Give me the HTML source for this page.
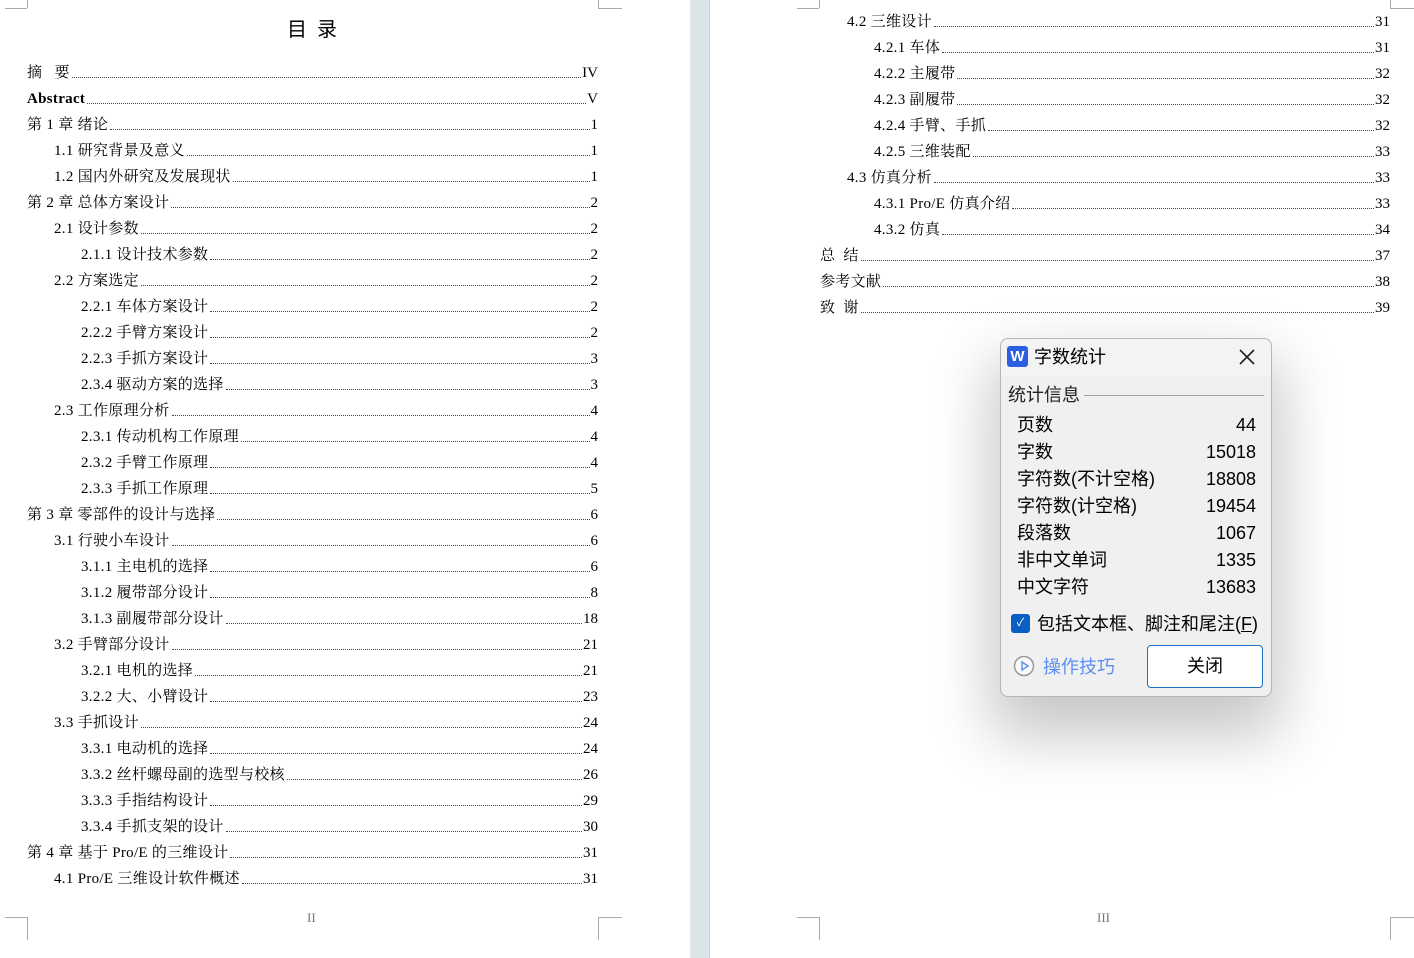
<!DOCTYPE html>
<html><head><meta charset="utf-8"><style>
*{margin:0;padding:0;box-sizing:border-box}
body{width:1414px;height:958px;background:#fff;position:relative;overflow:hidden;font-family:"Liberation Serif","Noto Serif CJK SC",serif;color:#000}
.strip{position:absolute;left:690px;top:0;width:20px;height:958px;background:#d9e5e6;border-left:1px solid #e6eeee;border-right:1px solid #c9d6d7}
.r{position:absolute;height:20px;display:flex;align-items:flex-end;font-size:15px;line-height:20px;white-space:nowrap;margin-top:1px}
.r .t{padding-right:1px;letter-spacing:0.3px}
.r .d{flex:1;border-bottom:1px dotted #444;margin-bottom:5px;margin-left:1px;margin-right:1px}
.m{position:absolute;background:#aaa}
.pn{position:absolute;font-size:13px;color:#777}
.dlg{position:absolute;left:1000px;top:338px;width:272px;height:359px;background:#f0f0f0;border:1px solid #b5b5b5;border-radius:8px;box-shadow:0 30px 60px 10px rgba(0,0,0,.22);font-family:"Liberation Sans","Noto Sans CJK SC",sans-serif}
.dlg .tb{position:absolute;left:0;top:0;width:270px;height:38px;background:#f3f3f3;border-radius:8px 8px 0 0}
.row{position:absolute;left:16px;width:239px;font-size:18px;display:flex;justify-content:space-between;line-height:26px}
</style></head><body>
<div class="strip"></div>
<div class="m" style="left:27px;top:0;width:1px;height:8px"></div><div class="m" style="left:5px;top:8px;width:22px;height:1px"></div>
<div class="m" style="left:598px;top:0;width:1px;height:8px"></div><div class="m" style="left:598px;top:8px;width:24px;height:1px"></div>
<div class="m" style="left:27px;top:917px;width:1px;height:23px"></div><div class="m" style="left:5px;top:917px;width:22px;height:1px"></div>
<div class="m" style="left:598px;top:917px;width:1px;height:23px"></div><div class="m" style="left:598px;top:917px;width:24px;height:1px"></div>
<div class="m" style="left:819px;top:0;width:1px;height:8px"></div><div class="m" style="left:797px;top:8px;width:22px;height:1px"></div>
<div class="m" style="left:1390px;top:0;width:1px;height:8px"></div><div class="m" style="left:1390px;top:8px;width:24px;height:1px"></div>
<div class="m" style="left:819px;top:917px;width:1px;height:23px"></div><div class="m" style="left:797px;top:917px;width:22px;height:1px"></div>
<div class="m" style="left:1390px;top:917px;width:1px;height:23px"></div><div class="m" style="left:1390px;top:917px;width:24px;height:1px"></div>

<div style="position:absolute;left:287px;top:13px;font-size:20px;font-family:'Noto Sans CJK SC',sans-serif;letter-spacing:10px">目录</div>

<div class="r" style="left:27px;width:571px;top:62px"><span class="t">摘&nbsp;&nbsp;&nbsp;要</span><span class="d"></span><span>IV</span></div>
<div class="r" style="left:27px;width:571px;top:88px"><span class="t"><b>Abstract</b></span><span class="d"></span><span>V</span></div>
<div class="r" style="left:27px;width:571px;top:114px"><span class="t">第 1 章 绪论</span><span class="d"></span><span>1</span></div>
<div class="r" style="left:54px;width:544px;top:140px"><span class="t">1.1 研究背景及意义</span><span class="d"></span><span>1</span></div>
<div class="r" style="left:54px;width:544px;top:166px"><span class="t">1.2 国内外研究及发展现状</span><span class="d"></span><span>1</span></div>
<div class="r" style="left:27px;width:571px;top:192px"><span class="t">第 2 章 总体方案设计</span><span class="d"></span><span>2</span></div>
<div class="r" style="left:54px;width:544px;top:218px"><span class="t">2.1 设计参数</span><span class="d"></span><span>2</span></div>
<div class="r" style="left:81px;width:517px;top:244px"><span class="t">2.1.1 设计技术参数</span><span class="d"></span><span>2</span></div>
<div class="r" style="left:54px;width:544px;top:270px"><span class="t">2.2 方案选定</span><span class="d"></span><span>2</span></div>
<div class="r" style="left:81px;width:517px;top:296px"><span class="t">2.2.1 车体方案设计</span><span class="d"></span><span>2</span></div>
<div class="r" style="left:81px;width:517px;top:322px"><span class="t">2.2.2 手臂方案设计</span><span class="d"></span><span>2</span></div>
<div class="r" style="left:81px;width:517px;top:348px"><span class="t">2.2.3 手抓方案设计</span><span class="d"></span><span>3</span></div>
<div class="r" style="left:81px;width:517px;top:374px"><span class="t">2.3.4 驱动方案的选择</span><span class="d"></span><span>3</span></div>
<div class="r" style="left:54px;width:544px;top:400px"><span class="t">2.3 工作原理分析</span><span class="d"></span><span>4</span></div>
<div class="r" style="left:81px;width:517px;top:426px"><span class="t">2.3.1 传动机构工作原理</span><span class="d"></span><span>4</span></div>
<div class="r" style="left:81px;width:517px;top:452px"><span class="t">2.3.2 手臂工作原理</span><span class="d"></span><span>4</span></div>
<div class="r" style="left:81px;width:517px;top:478px"><span class="t">2.3.3 手抓工作原理</span><span class="d"></span><span>5</span></div>
<div class="r" style="left:27px;width:571px;top:504px"><span class="t">第 3 章 零部件的设计与选择</span><span class="d"></span><span>6</span></div>
<div class="r" style="left:54px;width:544px;top:530px"><span class="t">3.1 行驶小车设计</span><span class="d"></span><span>6</span></div>
<div class="r" style="left:81px;width:517px;top:556px"><span class="t">3.1.1 主电机的选择</span><span class="d"></span><span>6</span></div>
<div class="r" style="left:81px;width:517px;top:582px"><span class="t">3.1.2 履带部分设计</span><span class="d"></span><span>8</span></div>
<div class="r" style="left:81px;width:517px;top:608px"><span class="t">3.1.3 副履带部分设计</span><span class="d"></span><span>18</span></div>
<div class="r" style="left:54px;width:544px;top:634px"><span class="t">3.2 手臂部分设计</span><span class="d"></span><span>21</span></div>
<div class="r" style="left:81px;width:517px;top:660px"><span class="t">3.2.1 电机的选择</span><span class="d"></span><span>21</span></div>
<div class="r" style="left:81px;width:517px;top:686px"><span class="t">3.2.2 大、小臂设计</span><span class="d"></span><span>23</span></div>
<div class="r" style="left:54px;width:544px;top:712px"><span class="t">3.3 手抓设计</span><span class="d"></span><span>24</span></div>
<div class="r" style="left:81px;width:517px;top:738px"><span class="t">3.3.1 电动机的选择</span><span class="d"></span><span>24</span></div>
<div class="r" style="left:81px;width:517px;top:764px"><span class="t">3.3.2 丝杆螺母副的选型与校核</span><span class="d"></span><span>26</span></div>
<div class="r" style="left:81px;width:517px;top:790px"><span class="t">3.3.3 手指结构设计</span><span class="d"></span><span>29</span></div>
<div class="r" style="left:81px;width:517px;top:816px"><span class="t">3.3.4 手抓支架的设计</span><span class="d"></span><span>30</span></div>
<div class="r" style="left:27px;width:571px;top:842px"><span class="t">第 4 章 基于 Pro/E 的三维设计</span><span class="d"></span><span>31</span></div>
<div class="r" style="left:54px;width:544px;top:868px"><span class="t">4.1 Pro/E 三维设计软件概述</span><span class="d"></span><span>31</span></div>
<div class="pn" style="left:307px;top:910px">II</div>

<div class="r" style="left:847px;width:543px;top:11px"><span class="t">4.2 三维设计</span><span class="d"></span><span>31</span></div>
<div class="r" style="left:874px;width:516px;top:37px"><span class="t">4.2.1 车体</span><span class="d"></span><span>31</span></div>
<div class="r" style="left:874px;width:516px;top:63px"><span class="t">4.2.2 主履带</span><span class="d"></span><span>32</span></div>
<div class="r" style="left:874px;width:516px;top:89px"><span class="t">4.2.3 副履带</span><span class="d"></span><span>32</span></div>
<div class="r" style="left:874px;width:516px;top:115px"><span class="t">4.2.4 手臂、手抓</span><span class="d"></span><span>32</span></div>
<div class="r" style="left:874px;width:516px;top:141px"><span class="t">4.2.5 三维装配</span><span class="d"></span><span>33</span></div>
<div class="r" style="left:847px;width:543px;top:167px"><span class="t">4.3 仿真分析</span><span class="d"></span><span>33</span></div>
<div class="r" style="left:874px;width:516px;top:193px"><span class="t">4.3.1 Pro/E 仿真介绍</span><span class="d"></span><span>33</span></div>
<div class="r" style="left:874px;width:516px;top:219px"><span class="t">4.3.2 仿真</span><span class="d"></span><span>34</span></div>
<div class="r" style="left:820px;width:570px;top:245px"><span class="t">总&nbsp;&nbsp;结</span><span class="d"></span><span>37</span></div>
<div class="r" style="left:820px;width:570px;top:271px"><span class="t">参考文献</span><span class="d"></span><span>38</span></div>
<div class="r" style="left:820px;width:570px;top:297px"><span class="t">致&nbsp;&nbsp;谢</span><span class="d"></span><span>39</span></div>
<div class="pn" style="left:1097px;top:910px">III</div>

<div class="dlg">
 <div class="tb"></div>
 <div style="position:absolute;left:6px;top:7px;width:21px;height:21px;background:#2b5fe0;border-radius:3px;color:#fff;font-weight:bold;font-size:15px;text-align:center;line-height:21px">W</div>
 <div style="position:absolute;left:33px;top:5px;font-size:18px;line-height:26px">字数统计</div>
 <svg style="position:absolute;left:237px;top:9px" width="18" height="18"><path d="M2 2L16 16M16 2L2 16" stroke="#222" stroke-width="1.6"/></svg>
 <div style="position:absolute;left:7px;top:43px;font-size:18px;line-height:26px;color:#222">统计信息</div>
 <div style="position:absolute;left:83px;top:56px;width:180px;height:1px;background:#a0a0a0"></div>
 <div class="row" style="top:73px"><span>页数</span><span>44</span></div>
 <div class="row" style="top:100px"><span>字数</span><span>15018</span></div>
 <div class="row" style="top:127px"><span>字符数(不计空格)</span><span>18808</span></div>
 <div class="row" style="top:154px"><span>字符数(计空格)</span><span>19454</span></div>
 <div class="row" style="top:181px"><span>段落数</span><span>1067</span></div>
 <div class="row" style="top:208px"><span>非中文单词</span><span>1335</span></div>
 <div class="row" style="top:235px"><span>中文字符</span><span>13683</span></div>
 <div style="position:absolute;left:10px;top:275px;width:19px;height:19px;background:#0a5fc4;border-radius:3px;color:#fff;font-size:11px;text-align:center;line-height:19px">✓</div>
 <div style="position:absolute;left:36px;top:272px;font-size:18px;line-height:26px">包括文本框、脚注和尾注(<u>F</u>)</div>
 <svg style="position:absolute;left:12px;top:316px" width="22" height="22"><circle cx="11" cy="11" r="9.5" fill="#fafafa" stroke="#999" stroke-width="1.5"/><path d="M9 7L15 11L9 15Z" fill="none" stroke="#5b8ef0" stroke-width="1.4"/></svg>
 <div style="position:absolute;left:42px;top:315px;font-size:18px;line-height:26px;color:#5b8ef0">操作技巧</div>
 <div style="position:absolute;left:146px;top:306px;width:116px;height:43px;background:#fff;border:1px solid #1a6fc7;border-radius:4px;font-size:18px;text-align:center;line-height:41px">关闭</div>
</div>
</body></html>
